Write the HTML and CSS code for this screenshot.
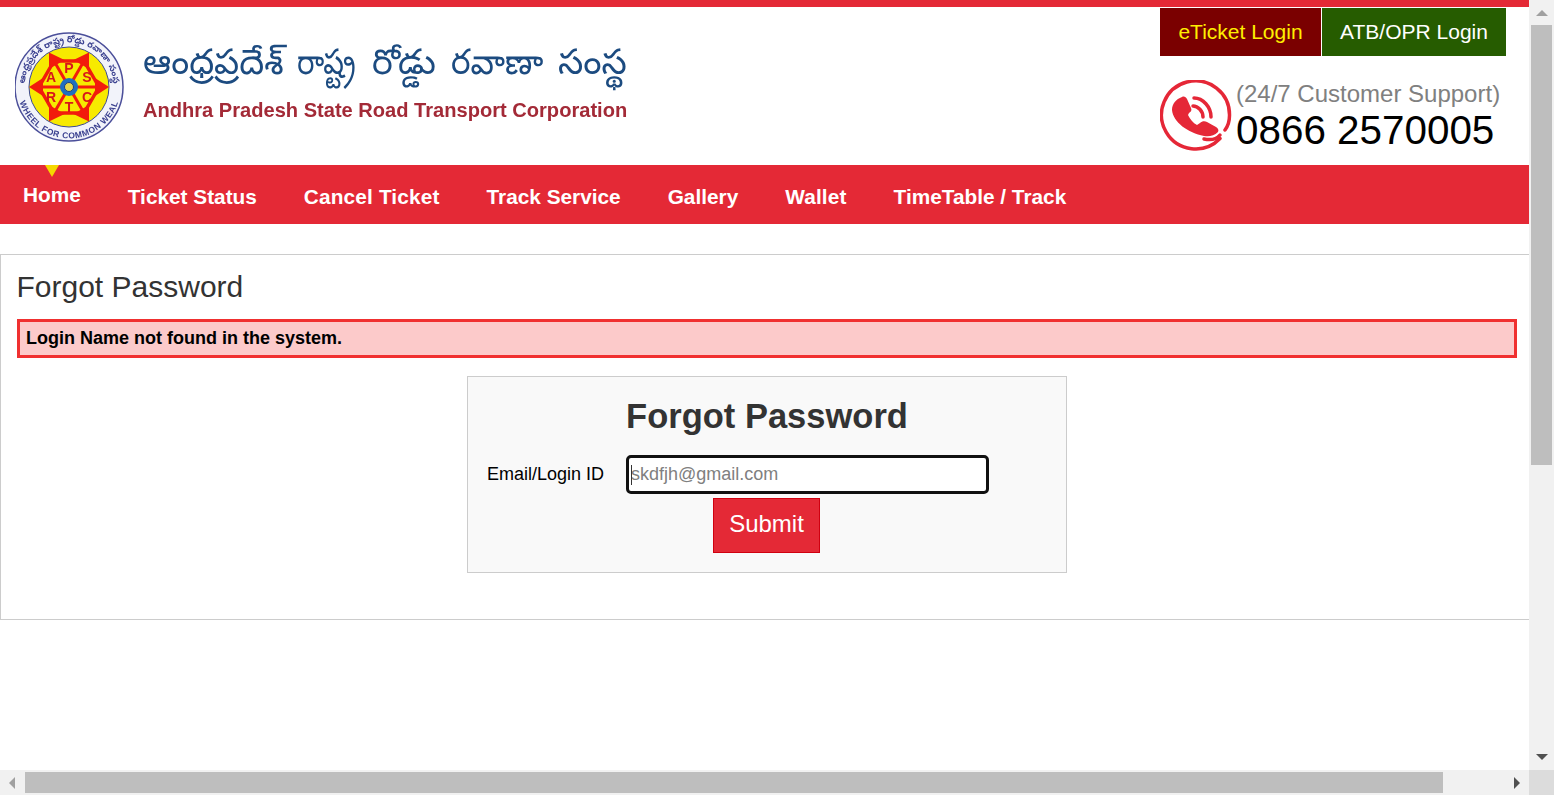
FILE: index.html
```html
<!DOCTYPE html>
<html lang="en">
<head>
<meta charset="utf-8">
<title>Forgot Password</title>
<link rel="stylesheet" href="styles.css">
</head>
<body>
<div class="viewport">
  <main class="page">
    <div class="topline"></div>
    <header class="masthead">
      <div class="brand">
        <svg class="seal" viewBox="0 0 110 110" aria-label="APSRTC seal">
          <defs>
            <path id="arcTop" d="M 10 61.600 A 44.500 44.500 0 1 1 98 61.600"/>
            <path id="arcBot" d="M 3 62.100 A 51.500 51.500 0 0 0 105 62.100"/>
          </defs>
          <circle cx="54" cy="55" r="54" fill="#f2f3fa" stroke="#4b4f9a" stroke-width="1.500"/>
          <text class="seal-top"><textPath href="#arcTop" startOffset="50%" text-anchor="middle">ఆంధ్రప్రదేశ్ రాష్ట్ర రోడ్డు రవాణా సంస్థ</textPath></text>
          <text class="seal-bot"><textPath href="#arcBot" startOffset="50%" text-anchor="middle">WHEEL FOR COMMON WEAL</textPath></text>
          <circle cx="54" cy="55" r="40" fill="#f7ea00" stroke="#3d4a92" stroke-width="1"/>
          <g fill="none" stroke="#f21c0c" stroke-width="3.500">
            <path d="M84 55 L69 29 L39 29 L24 55 L39 81 L69 81 Z"/>
            <path d="M24 55 H84 M39 29 L69 81 M69 29 L39 81" stroke-width="3"/>
          </g>
          <g fill="#f21c0c">
            <path d="M94 55 L80 46 L80 64 Z"/>
            <path d="M74 20.500 L74 37 L58.500 28 Z"/>
            <path d="M34 20.500 L49.500 28 L34 37 Z"/>
            <path d="M14 55 L28 46 L28 64 Z"/>
            <path d="M34 89.500 L34 73 L49.500 82 Z"/>
            <path d="M74 89.500 L58.500 82 L74 73 Z"/>
          </g>
          <g class="seal-letters" text-anchor="middle">
            <text x="54" y="41">P</text>
            <text x="72" y="50">S</text>
            <text x="72" y="70">C</text>
            <text x="54" y="80">T</text>
            <text x="36" y="70">R</text>
            <text x="36" y="50">A</text>
          </g>
          <circle cx="54" cy="55" r="9" fill="#1f6fc0"/>
          <circle cx="54" cy="55" r="4.500" fill="#e6d84a" stroke="#1d3f80" stroke-width="1"/>
        </svg>
        <div class="brand-text">
          <div class="brand-telugu">
            <span class="word word-first">ఆంధ్రప్రదేశ్</span>
            <span class="word word-state">రాష్ట్ర</span>
            <span class="word word-road">రోడ్డు</span>
            <span class="word word-transport">రవాణా</span>
            <span class="word word-last">సంస్థ</span>
          </div>
          <div class="brand-english">Andhra Pradesh State Road Transport Corporation</div>
        </div>
      </div>
      <div class="contact">
        <div class="logins">
          <a class="login login-ticket" href="#">eTicket Login</a>
          <a class="login login-atb" href="#">ATB/OPR Login</a>
        </div>
        <div class="support">
          <svg class="phone" viewBox="0 0 72 72" aria-hidden="true">
            <path fill="none" stroke="#e52737" stroke-width="3.500" stroke-linecap="round" d="M60 58.500 A34 34 0 1 1 69.500 35.500 C69.500 41 68 46 65 50"/>
            <path fill="#e52737" d="M12 30 C12 24 16 19 22 17 C24 16 26 17 27 19 L31 28 C32 30 31 32 29 33 L28 35 C30 39 33 43 37 45 L40 43 C42 41 45 41 47 42 L56 47 C58 48 59 50 58 52 C54 56 49 57 44 56 C28 53 13 42 12 30 Z"/>
            <path fill="none" stroke="#e52737" stroke-width="3.500" stroke-linecap="round" d="M44 59 C49 60 56 60 60 55"/>
            <path fill="none" stroke="#e52737" stroke-width="3.500" stroke-linecap="round" d="M33 26 C38 26 43 31 43 37"/>
            <path fill="none" stroke="#e52737" stroke-width="3.500" stroke-linecap="round" d="M34 18 C43 18 51 27 51 37"/>
          </svg>
          <div class="support-text">
            <div class="support-label">(24/7 Customer Support)</div>
            <div class="support-number">0866 2570005</div>
          </div>
        </div>
      </div>
    </header>
    <nav class="nav">
      <a class="nav-item nav-active" href="#">Home</a>
      <a class="nav-item" href="#">Ticket Status</a>
      <a class="nav-item nav-wide" href="#">Cancel Ticket</a>
      <a class="nav-item" href="#">Track Service</a>
      <a class="nav-item" href="#">Gallery</a>
      <a class="nav-item nav-wide" href="#">Wallet</a>
      <a class="nav-item" href="#">TimeTable / Track</a>
    </nav>
    <section class="panel">
      <h2 class="panel-title">Forgot Password</h2>
      <div class="alert">Login Name not found in the system.</div>
      <form class="card">
        <h1 class="card-title">Forgot Password</h1>
        <div class="field">
          <label class="field-label" for="login">Email/Login ID</label>
          <span class="input-wrap">
            <input class="field-input" id="login" type="text" placeholder="skdfjh@gmail.com">
          </span>
        </div>
        <button class="submit" type="button">Submit</button>
      </form>
    </section>
  </main>
  <div class="vbar">
    <span class="arrow arrow-up"></span>
    <div class="vthumb"></div>
    <span class="arrow arrow-down"></span>
  </div>
  <div class="hbar">
    <span class="arrow arrow-left"></span>
    <div class="hthumb"></div>
    <span class="arrow arrow-right"></span>
  </div>
  <div class="corner"></div>
</div>
</body>
</html>
```
FILE: styles.css
```css
* { box-sizing: border-box; }
html, body { margin: 0; height: 100%; overflow: hidden; }
body { font-family: "Liberation Sans", Arial, sans-serif; color: #000; background: #fff; }
a { text-decoration: none; }

.viewport {
  display: grid;
  grid-template-columns: 1529px 25px;
  grid-template-rows: 770px 25px;
  width: 1554px;
  height: 795px;
}
.page { overflow: hidden; min-width: 0; }
.topline { height: 7px; background: #e42936; }

.masthead { display: flex; justify-content: space-between; height: 158px; }
.brand { display: flex; align-items: flex-start; padding: 25px 0 0 15px; }
.seal { width: 110px; height: 110px; flex: none; filter: blur(.4px); }
.seal-top { font: bold 9px "Noto Sans Telugu", "Noto Sans", sans-serif; fill: #3b4190; }
.seal-bot { font: bold 8.5px "Liberation Sans", sans-serif; fill: #3b4190; letter-spacing: .5px; }
.seal-letters { font: bold 14px "Liberation Sans", sans-serif; fill: #d8161a; }
.brand-text { margin-left: 18px; width: 490px; filter: blur(.3px); }
.brand-telugu {
  display: flex;
  gap: 15px;
  height: 66px;
  padding-top: 12px;
  font-family: "Noto Sans Telugu", "Noto Sans", sans-serif;
  font-size: 35px;
  line-height: 48px;
  color: #1c4b80;
  white-space: nowrap;
}
.word { display: block; flex: none; transform-origin: left center; }
.word-first { transform: scaleX(1.01); }
.word-state { transform: scaleX(.83); margin-right: -9px; }
.word-road { margin-left: -2px; }
.word-transport { transform: scaleX(.94); margin-right: -6px; }
.word-last { transform: scaleX(1.03); }
.brand-english { font-size: 20.08px; line-height: 24px; font-weight: 700; color: #a32a37; white-space: nowrap; }

.contact { display: flex; flex-direction: column; width: 369px; padding-top: 1px; }
.logins { display: flex; gap: 1px; }
.login {
  display: flex;
  align-items: center;
  justify-content: center;
  height: 48px;
  font-size: 21px;
}
.login-ticket { width: 161px; background: #7a0000; color: #ffee00; }
.login-atb { width: 184px; background: #265c00; color: #fff; }
.support { display: flex; margin-top: 24px; }
.phone { width: 72px; height: 72px; flex: none; margin-right: 4px; filter: blur(.3px); }
.support-label { font-size: 24px; line-height: 28px; color: #808080; white-space: nowrap; }
.support-number { font-size: 40.4px; line-height: 44px; white-space: nowrap; }

.nav { display: flex; gap: 47px; height: 59px; padding-left: 23px; background: #e42936; }
.nav-item { position: relative; font-size: 20.8px; font-weight: 700; line-height: 64px; color: #fff; }
.nav-wide { letter-spacing: .15px; }
.nav-active { line-height: 60px; }
.nav-active::before {
  content: "";
  position: absolute;
  top: 0;
  left: 50%;
  margin-left: -6.500px;
  border-top: 12px solid #f5d800;
  border-left: 7.500px solid transparent;
  border-right: 7.500px solid transparent;
}

.panel {
  height: 366px;
  margin-top: 30px;
  padding: 0 12px 0 16px;
  border: 1px solid #ccc;
  border-right: 0;
}
.panel-title { margin: 0 0 0 -.5px; padding-top: 12px; font-size: 30px; font-weight: 400; line-height: 39px; color: #333; }
.alert {
  height: 39px;
  margin-top: 13px;
  padding: 0 6px;
  border: 3px solid #f03030;
  background: #fccaca;
  font-size: 18px;
  font-weight: 700;
  line-height: 32px;
}
.card {
  display: flex;
  flex-direction: column;
  align-items: center;
  width: 600px;
  height: 197px;
  margin: 18px auto 0;
  border: 1px solid #ccc;
  background: #f9f9f9;
}
.card-title { margin: 0; padding-top: 19px; font-size: 34.500px; line-height: 40px; color: #333; }
.field { display: flex; align-items: center; align-self: flex-start; margin: 19px 0 0 19px; }
.field-label { width: 139px; font-size: 18px; }
.input-wrap { position: relative; display: block; }
.input-wrap::after {
  content: "";
  position: absolute;
  top: 10px;
  left: 5px;
  width: 1px;
  height: 20px;
  background: #333;
}
.field-input {
  display: block;
  width: 363px;
  height: 39px;
  padding: 0 2px;
  border: 3px solid #111;
  border-radius: 5px;
  background: #fff;
  font: 18px "Liberation Sans", sans-serif;
  outline: none;
}
.field-input::placeholder { color: #808080; opacity: 1; }
.submit {
  width: 107px;
  height: 55px;
  margin: 4px 2px 0 0;
  padding: 0 0 3px 1px;
  border: 1px solid #d00010;
  background: #e42936;
  color: #fff;
  font: 24px "Liberation Sans", sans-serif;
}

.vbar { display: flex; flex-direction: column; align-items: center; background: #f1f1f1; padding: 0 2px; }
.vthumb { width: 21px; height: 440px; background: #bebebe; margin-top: 9px; }
.hbar { display: flex; align-items: center; background: #f1f1f1; padding-left: 9px; }
.hthumb { width: 1418px; height: 21px; background: #bebebe; margin-left: 10px; }
.corner { background: #dcdcdc; }
.arrow { flex: none; width: 0; height: 0; border-style: solid; border-color: transparent; }
.arrow-up { margin-top: 10px; border-width: 0 6px 6px; border-bottom-color: #a0a0a0; }
.arrow-down { margin-top: 289px; border-width: 6px 6px 0; border-top-color: #505050; }
.arrow-left { border-width: 6px 6px 6px 0; border-right-color: #a0a0a0; }
.arrow-right { margin-left: 71px; border-width: 6px 0 6px 6px; border-left-color: #505050; }
```
